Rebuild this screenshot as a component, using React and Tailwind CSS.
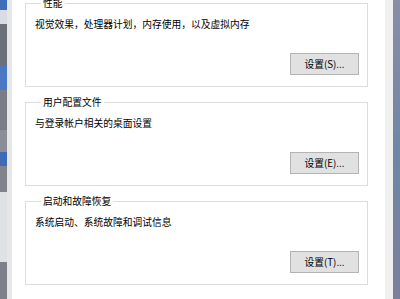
import React from "react";

const font = { fontFamily: '"Noto Sans CJK SC", "Microsoft YaHei", sans-serif' };

const groups = [
  { title: "性能", desc: "视觉效果，处理器计划，内存使用，以及虚拟内存", btn: "设置(S)..." },
  { title: "用户配置文件", desc: "与登录帐户相关的桌面设置", btn: "设置(E)..." },
  { title: "启动和故障恢复", desc: "系统启动、系统故障和调试信息", btn: "设置(T)..." },
];

// pieces of the desktop showing at the left edge
const DesktopStrip = () => (
  <div className="w-[7px] flex flex-col shrink-0 overflow-hidden">
    <div className="h-[10px] bg-[#3f6fb8]"></div>
    <div className="h-[14px] bg-[#d9dce2]"></div>
    <div className="h-[42px] bg-[#6c7079]"></div>
    <div className="h-[24px] bg-[#4a78c2]"></div>
    <div className="h-[40px] bg-[#7a7d86]"></div>
    <div className="h-[22px] bg-[#8b8e96]"></div>
    <div className="h-[14px] bg-[#3d6bb5]"></div>
    <div className="h-[26px] bg-[#80838c]"></div>
    <div className="h-[70px] bg-[#dfe1e5]"></div>
    <div className="flex-1 bg-[#7d8089]"></div>
  </div>
);

const Group = ({ title, desc, btn, first }) => (
  <fieldset
    className={`border border-[#dcdcdc] pl-[9px] pr-[8px] pb-[11px] ${first ? "mt-[-4px]" : ""}`}
  >
    <legend className="ml-[6px] px-[2px] text-[9.75px] leading-[14px] text-black">{title}</legend>
    <div className="mt-[7px] text-[9.75px] leading-[14px] text-black">{desc}</div>
    <div className="flex justify-end mt-[22px]">
      <button className="w-[69px] h-[22px] bg-[#e1e1e1] border border-[#b4b4b4] text-[9.75px] leading-[14px] text-black">
        {btn}
      </button>
    </div>
  </fieldset>
);

export default function App() {
  return (
    <div className="w-[400px] h-[299px] flex overflow-hidden bg-white" style={font}>
      <DesktopStrip />
      <div className="w-[5px] bg-[#e6e6e6] shrink-0"></div>
      <main className="flex-1 flex flex-col gap-[8px] pl-[13px] pr-[17px] overflow-hidden">
        {groups.map((g, i) => (
          <Group key={g.title} {...g} first={i === 0} />
        ))}
        <div className="flex justify-end mt-[6px] mr-[-1px]">
          <button className="w-[120px] h-[22px] bg-[#e1e1e1] border border-[#b4b4b4] text-[9.75px] text-black shrink-0">
            环境变量(N)...
          </button>
        </div>
      </main>
      <div className="w-[8px] bg-[#f0f0f0] shrink-0"></div>
      <div className="w-[7px] shrink-0 bg-linear-to-b from-[#8a8ea6] via-[#6f86a6] to-[#7a7f9c]"></div>
    </div>
  );
}
